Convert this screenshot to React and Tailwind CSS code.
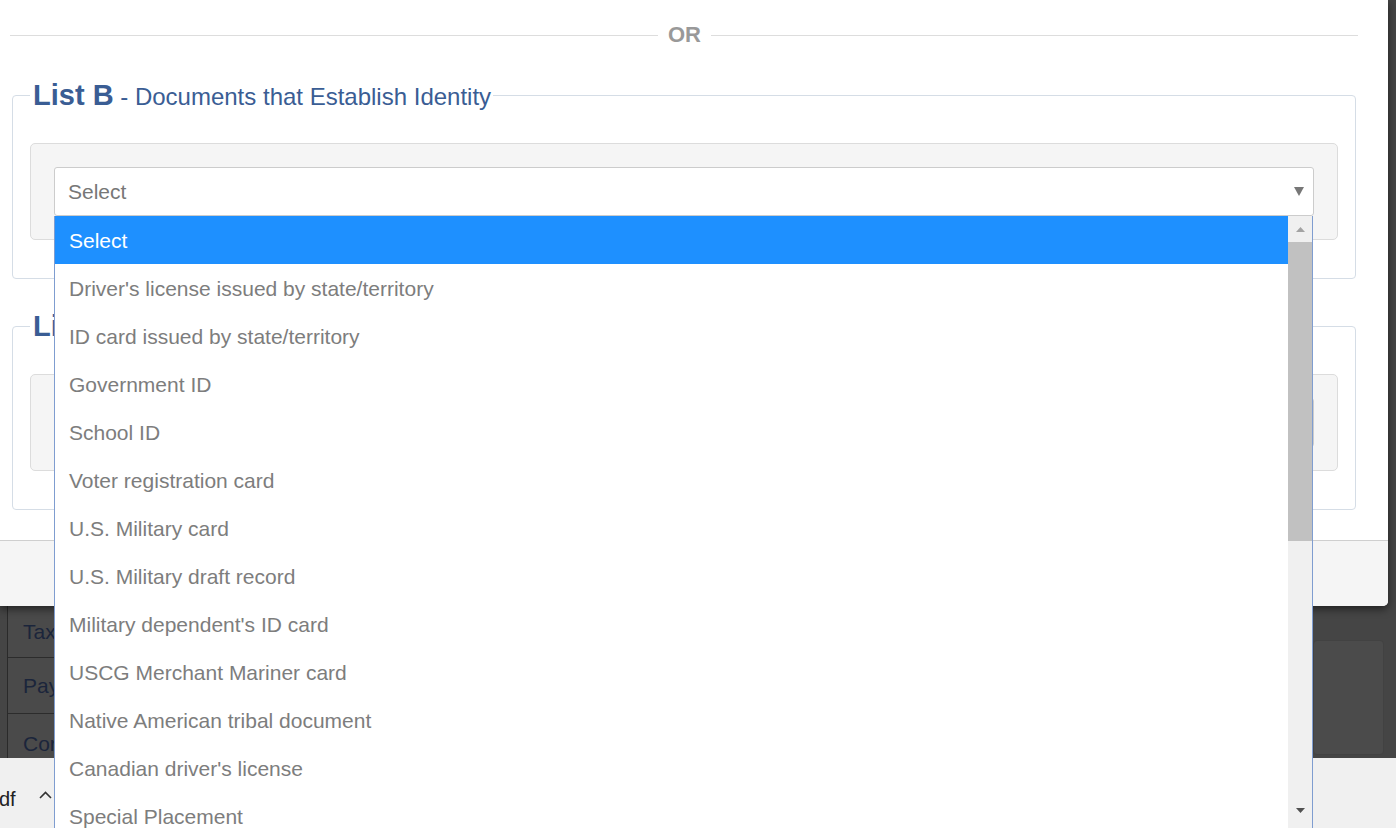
const OPTIONS = [
  'Select',
  "Driver's license issued by state/territory",
  'ID card issued by state/territory',
  'Government ID',
  'School ID',
  'Voter registration card',
  'U.S. Military card',
  'U.S. Military draft record',
  "Military dependent's ID card",
  'USCG Merchant Mariner card',
  'Native American tribal document',
  "Canadian driver's license",
  'Special Placement',
];

const ListFieldset = ({ letter, title, className }) => (
  <fieldset
    className={`ml-[12px] w-[1344px] rounded-[4px] border border-[#d5dde6] px-[17px] pt-[26px] pb-[38px] ${className}`}
  >
    <legend className="pl-[3px] pr-[2px] pt-[4px] leading-[34px] text-[#3a5d94] whitespace-nowrap">
      <span className="text-[29px] font-bold">List {letter}</span>
      <span className="text-[24px]"> - {title}</span>
    </legend>
    <div className="rounded-[5px] border border-[#dcdcdc] bg-[#f5f5f5] p-[23px]">
      <div className="flex h-[49px] items-center justify-between rounded-[3px] border border-[#cccccc] bg-white pl-[13px] pr-[9px]">
        <span className="text-[21px] text-[#777]">Select</span>
        <svg width="10" height="9" viewBox="0 0 10 9">
          <path d="M0 0 H10 L5 9 Z" fill="#777" />
        </svg>
      </div>
    </div>
  </fieldset>
);

const Dropdown = () => (
  <div className="absolute left-[54px] top-[216px] z-20 flex h-[612px] w-[1259px] border-x border-[#7f9dd0] bg-white">
    <div className="flex-1 overflow-hidden">
      {OPTIONS.map((opt, i) => (
        <div
          key={opt}
          className={`flex h-[48px] items-center pl-[14px] pt-[2px] text-[21px] ${
            i === 0 ? 'bg-[#1e90ff] text-white' : 'text-[#7d7d7d]'
          }`}
        >
          {opt}
        </div>
      ))}
    </div>
    <div className="flex w-[24px] flex-col bg-[#f0f0f0]">
      <div className="flex h-[26px] items-center justify-center">
        <svg width="9" height="5" viewBox="0 0 9 5">
          <path d="M0 5 L4.5 0 L9 5 Z" fill="#a3a3a3" />
        </svg>
      </div>
      <div className="h-[299px] bg-[#c1c1c1]" />
      <div className="flex-1" />
      <div className="flex h-[24px] items-start justify-center pt-[4px]">
        <svg width="9" height="5" viewBox="0 0 9 5">
          <path d="M0 0 H9 L4.5 5 Z" fill="#505050" />
        </svg>
      </div>
    </div>
  </div>
);

export default function App() {
  return (
    <div className="relative h-[828px] w-[1396px] overflow-hidden bg-[#454545] font-['Liberation_Sans',Arial,sans-serif]">
      <div className="flex h-[758px] flex-col">
        {/* modal */}
        <div className="relative z-10 flex h-[606px] w-[1388px] flex-col overflow-hidden rounded-br-[5px] bg-white shadow-[0_3px_9px_rgba(0,0,0,0.55)]">
          <div className="flex-1">
            <div className="mt-[24px] flex h-[22px] items-center">
              <div className="ml-[10px] h-px w-[648px] bg-[#dddddd]" />
              <span className="mx-[10px] text-[22px] font-bold leading-[22px] text-[#999]">OR</span>
              <div className="mr-[30px] h-px flex-1 bg-[#dddddd]" />
            </div>
            <ListFieldset letter="B" title="Documents that Establish Identity" className="mt-[28px]" />
            <ListFieldset
              letter="C"
              title="Documents that Establish Employment Authorization"
              className="mt-[26px]"
            />
          </div>
          <div className="h-[66px] border-t border-[#cfcfcf] bg-[#f5f5f5]" />
        </div>

        {/* page behind the overlay */}
        <div className="flex flex-1">
          <div className="ml-[7px] flex w-[56px] flex-col border-l border-[#2a2a2a] bg-[#4a4a4a]">
            <div className="flex h-[51px] items-center pl-[15px] text-[21px] text-[#1b253b]">Tax</div>
            <div className="flex h-[56px] items-center border-t border-[#2c2c2c] pl-[15px] text-[21px] text-[#1b253b]">Pay</div>
            <div className="flex h-[45px] items-start border-t border-[#2c2c2c] pl-[15px] pt-[14px] text-[21px] text-[#1b253b]">Cor</div>
          </div>
          <div className="flex-1" />
          <div className="mr-[12px] mt-[34px] h-[115px] w-[71px] rounded-[4px] border border-[#424242] bg-[#4b4b4b]" />
        </div>
      </div>

      {/* download bar */}
      <div className="flex h-[70px] items-center bg-[#f0f0f0] pt-[12px] text-[20px] text-[#222]">
        <span className="-ml-[1px] pb-[1px]">df</span>
        <svg className="mb-[8px] ml-[23px]" width="13" height="8" viewBox="0 0 13 8">
          <path d="M1 7 L6.5 1.5 L12 7" fill="none" stroke="#333" strokeWidth="1.6" />
        </svg>
      </div>

      <Dropdown />
    </div>
  );
}
